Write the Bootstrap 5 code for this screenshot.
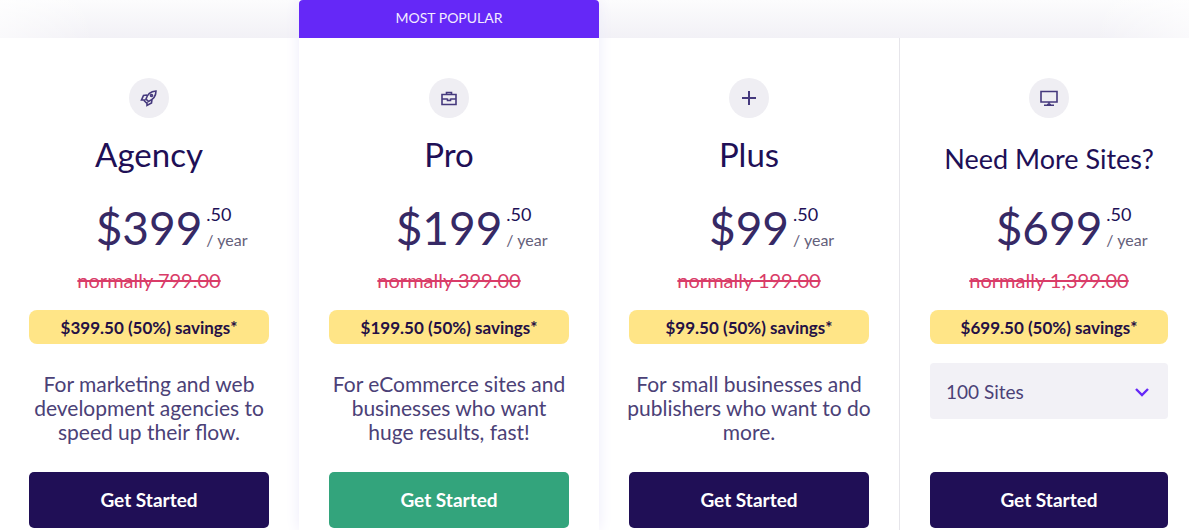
<!DOCTYPE html>
<html lang="en">
<head>
<meta charset="utf-8">
<meta name="viewport" content="width=device-width, initial-scale=1">
<title>Pricing</title>
<link href="https://cdn.jsdelivr.net/npm/bootstrap@5.3.0/dist/css/bootstrap.min.css" rel="stylesheet">
<style>
  body { font-family: Lato, sans-serif; font-size: 20px; line-height: 24px; color: #4b4177; background: #fff; }
  .pricing { min-height: 100vh; overflow: hidden; background: linear-gradient(90deg, #ffffff99, #fff0 8%, #fff0 92%, #ffffff99) top / 100% 38px no-repeat, linear-gradient(#fcfcfd, #f2f1f6) top / 100% 38px no-repeat; }
  .plans { margin: 0 -10px 0 -1px; }
  .plan { padding: 40px 30px 2px; background: #fff; margin-top: 38px; }
  .plan-popular { position: relative; z-index: 1; margin-top: 0; padding-top: 0; box-shadow: 0 0 14px #edebfa; }
  .plan-more { border-left: 1px solid #e6e5ea; padding-right: 31px; }
  .ribbon { height: 38px; margin: 0 -30px 40px; background: #6528f7; color: #f3ecff; font-size: 14px; line-height: 36px; border-radius: 4px 4px 0 0; }
  .plan-icon { width: 40px; height: 40px; background: #efeef3; }
  .plan-icon svg { width: 20px; height: 20px; fill: none; stroke: #45397d; stroke-width: 1.6; }
  .plan-name { height: 72px; margin: 0; font-size: 33px; line-height: 72px; font-weight: 400; color: #200f56; white-space: nowrap; }
  .plan-more .plan-name { font-size: 27px; line-height: 82px; }
  .price { height: 78px; font-size: 46px; line-height: 76px; color: #362965; }
  .price-side { top: 12px; margin-left: 4px; line-height: 24px; font-size: 18px; white-space: nowrap; color: #200f56; }
  .price-side small { display: block; font-size: 16px; line-height: 28px; color: #64607a; }
  .old-price { height: 42px; line-height: 24px; color: #d93c68; }
  .old-price s { text-decoration-thickness: 2px; }
  .savings { height: 34px; line-height: 35px; font-size: 17px; font-weight: 700; color: #241044; background: #ffe587; border-radius: 8px; white-space: nowrap; }
  .about { height: 72px; margin: 28px -10px 28px; font-size: 21px; }
  .sites { height: 56px; margin: 19px 0 53px; padding: 2px 16px 0; font-size: 19px; color: #4b4177; background-color: #f2f1f6; border: 0; border-radius: 4px;
    background-image: url("data:image/svg+xml,%3Csvg xmlns='http://www.w3.org/2000/svg' viewBox='0 0 16 16'%3E%3Cpath d='M2 6l6 6 6-6' fill='none' stroke='%236528f7' stroke-width='2.4'/%3E%3C/svg%3E"); background-position: right 18px center; background-size: 16px 16px; }
  .btn-start { height: 56px; font-size: 19px; font-weight: 700; color: #fff; background: #200f56; border: 0; border-radius: 5px; }
  .btn-start:hover { color: #fff; background: #362965; }
  .plan-popular .btn-start { background: #33a47c; }
</style>
</head>
<body>
<main class="pricing d-flex flex-column">
  <div class="plans row g-0 row-cols-4 flex-grow-1 text-center">
    <div class="col d-flex flex-column"><section class="plan flex-grow-1">
      <div class="plan-icon rounded-circle d-flex align-items-center justify-content-center mx-auto">
        <svg viewBox="0 0 20 20" aria-hidden="true"><path d="M7 11c1-4 4-7.500 10-8C17 8.500 13 12 9.500 13.500zM8 7L4.500 7.500l-2 4.500L6.500 12M13 11.500L12.500 15l-4.500 2.500V14M5 12.500L8 15.500"/><circle cx="12.500" cy="7.500" r="1"/></svg>
      </div>
      <h2 class="plan-name">Agency</h2>
      <div class="price"><span class="position-relative d-inline-block">$399<span class="price-side position-absolute start-100 text-start">.50<small>/ year</small></span></span></div>
      <div class="old-price"><s>normally 799.00</s></div>
      <div class="savings">$399.50 (50%) savings*</div>
      <p class="about">For marketing and web<br>development agencies to<br>speed up their flow.</p>
      <button type="button" class="btn btn-start w-100">Get Started</button>
    </section></div>

    <div class="col d-flex flex-column"><section class="plan plan-popular flex-grow-1">
      <div class="ribbon">MOST POPULAR</div>
      <div class="plan-icon rounded-circle d-flex align-items-center justify-content-center mx-auto">
        <svg viewBox="0 0 20 20" aria-hidden="true"><path d="M3 6.500h14v10H3zM7.500 6.500v-2h5v2M3 11h5.500M11.500 11H17M8.500 10.500v2h3v-2"/></svg>
      </div>
      <h2 class="plan-name">Pro</h2>
      <div class="price"><span class="position-relative d-inline-block">$199<span class="price-side position-absolute start-100 text-start">.50<small>/ year</small></span></span></div>
      <div class="old-price"><s>normally 399.00</s></div>
      <div class="savings">$199.50 (50%) savings*</div>
      <p class="about">For eCommerce sites and<br>businesses who want<br>huge results, fast!</p>
      <button type="button" class="btn btn-start w-100">Get Started</button>
    </section></div>

    <div class="col d-flex flex-column"><section class="plan flex-grow-1">
      <div class="plan-icon rounded-circle d-flex align-items-center justify-content-center mx-auto">
        <svg viewBox="0 0 20 20" aria-hidden="true"><path d="M10 3v14M3 10h14" stroke-width="2"/></svg>
      </div>
      <h2 class="plan-name">Plus</h2>
      <div class="price"><span class="position-relative d-inline-block">$99<span class="price-side position-absolute start-100 text-start">.50<small>/ year</small></span></span></div>
      <div class="old-price"><s>normally 199.00</s></div>
      <div class="savings">$99.50 (50%) savings*</div>
      <p class="about">For small businesses and<br>publishers who want to do<br>more.</p>
      <button type="button" class="btn btn-start w-100">Get Started</button>
    </section></div>

    <div class="col d-flex flex-column"><section class="plan plan-more flex-grow-1">
      <div class="plan-icon rounded-circle d-flex align-items-center justify-content-center mx-auto">
        <svg viewBox="0 0 20 20" aria-hidden="true"><path d="M2 3.500h16v10.500H2zM10 14v3M5 17.200h10M8 16.500h4"/></svg>
      </div>
      <h2 class="plan-name">Need More Sites?</h2>
      <div class="price"><span class="position-relative d-inline-block">$699<span class="price-side position-absolute start-100 text-start">.50<small>/ year</small></span></span></div>
      <div class="old-price"><s>normally 1,399.00</s></div>
      <div class="savings">$699.50 (50%) savings*</div>
      <select class="form-select sites" aria-label="Number of sites"><option>100 Sites</option></select>
      <button type="button" class="btn btn-start w-100">Get Started</button>
    </section></div>
  </div>
</main>
</body>
</html>
